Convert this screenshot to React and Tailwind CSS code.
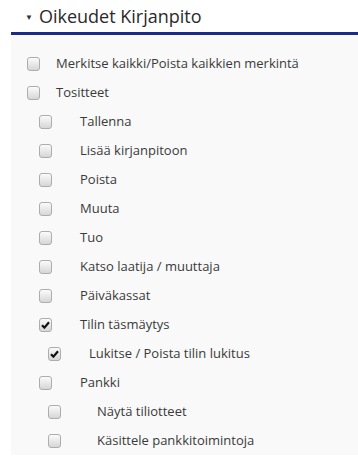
const items = [
  { label: "Merkitse kaikki/Poista kaikkien merkintä", box: 27, text: 56 },
  { label: "Tositteet", box: 27, text: 56 },
  { label: "Tallenna", box: 39, text: 80 },
  { label: "Lisää kirjanpitoon", box: 39, text: 80 },
  { label: "Poista", box: 39, text: 80 },
  { label: "Muuta", box: 39, text: 80 },
  { label: "Tuo", box: 39, text: 80 },
  { label: "Katso laatija / muuttaja", box: 39, text: 80 },
  { label: "Päiväkassat", box: 39, text: 80 },
  { label: "Tilin täsmäytys", box: 39, text: 80, checked: true },
  { label: "Lukitse / Poista tilin lukitus", box: 48, text: 89, checked: true },
  { label: "Pankki", box: 39, text: 80 },
  { label: "Näytä tiliotteet", box: 48, text: 97 },
  { label: "Käsittele pankkitoimintoja", box: 48, text: 97 },
];

const Check = ({ checked }) => (
  <span className="flex h-[14px] w-[13px] shrink-0 items-center justify-center rounded-[3px] border border-[#adadad] bg-gradient-to-b from-[#fbfbfb] to-[#d6d6d6]">
    {checked && (
      <svg width="9" height="8" viewBox="0 0 9 8">
        <path d="M1 4.2 L3.4 6.6 L8 1.2" fill="none" stroke="#111" strokeWidth="2.2" />
      </svg>
    )}
  </span>
);

export default function App() {
  return (
    <div className="h-[457px] w-[358px] bg-white font-['Open_Sans',sans-serif] text-[#333]">
      <div className="flex h-[32px] items-end pl-[25px] pb-[1px]">
        <span className="mb-[10px] mr-[6px] text-[8px] leading-none text-[#333]">▼</span>
        <span className="text-[18px] leading-[30px] text-[#2a2a2a]">Oikeudet Kirjanpito</span>
      </div>
      <div className="ml-[11px] border-t-[3px] border-[#1c2a8c] bg-[#f9f9f9] pt-[14px]">
        {items.map((it) => (
          <div key={it.label} className="flex h-[29px] items-center">
            <div className="flex items-center" style={{ paddingLeft: it.box - 11 }}>
              <Check checked={it.checked} />
            </div>
            <span
              className="text-[13px] leading-none text-[#3a3a3a]"
              style={{ marginLeft: it.text - it.box - 13 }}
            >
              {it.label}
            </span>
          </div>
        ))}
      </div>
    </div>
  );
}
